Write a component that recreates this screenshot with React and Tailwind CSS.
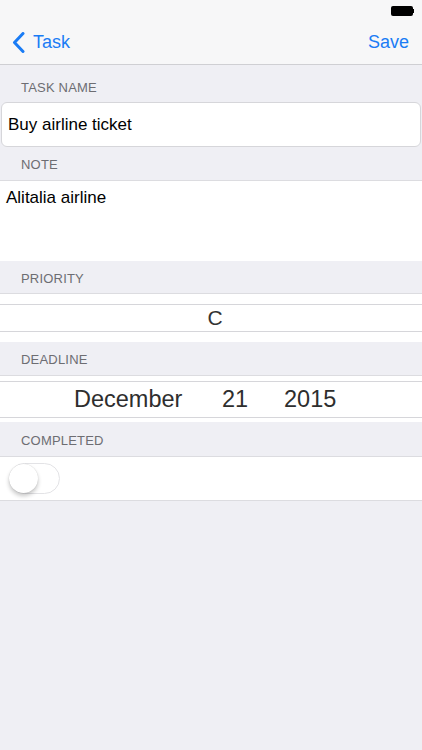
import React from "react";

function Header({ children, h, pt }) {
  return (
    <div className={`${h} ${pt} bg-[#efeff4] pl-[21px] text-[13px] leading-[16px] text-[#6d6d72] tracking-[0.2px]`}>
      {children}
    </div>
  );
}

export default function App() {
  return (
    <div className="min-h-[750px] w-[422px] bg-[#efeff4] font-['Liberation_Sans',Arial,sans-serif]">
      {/* Nav bar */}
      <div className="h-[65px] bg-[#f7f7f8] border-b border-[#cfcfd3] relative">
        <div className="h-[21px] flex items-center justify-end pr-[8px]">
          <div className="flex items-center">
            <div className="w-[22px] h-[10px] bg-black rounded-[2px]" />
            <div className="w-[1.5px] h-[4px] bg-black" />
          </div>
        </div>
        <div className="h-[43px] flex items-center justify-between pl-[12px] pr-[13px]">
          <div className="flex items-center text-[#1a7cf5] text-[18px]">
            <svg width="13" height="21" viewBox="0 0 13 21" className="mr-[8px]">
              <path d="M11 1.5 L2.5 10.5 L11 19.5" fill="none" stroke="#1a7cf5" strokeWidth="3" strokeLinecap="round" strokeLinejoin="round" />
            </svg>
            <span>Task</span>
          </div>
          <span className="text-[#1a7cf5] text-[18px]">Save</span>
        </div>
      </div>

      <Header h="h-[37px]" pt="pt-[15px]">TASK NAME</Header>
      <div className="h-[45px] mx-[1px] bg-white border border-[#d6d6da] rounded-[6px] flex items-center pl-[6px] text-[17px] text-black">
        Buy airline ticket
      </div>

      <Header h="h-[33px]" pt="pt-[10px]">NOTE</Header>
      <div className="h-[81px] bg-white border-t border-[#dcdce0] pl-[6px] pt-[7px] text-[17px] leading-[20px] text-black">
        Alitalia airline
      </div>

      <Header h="h-[32px]" pt="pt-[10px]">PRIORITY</Header>
      <div className="h-[49px] bg-white border-t border-[#dcdce0] pt-[10px]">
        <div className="h-[28px] border-y border-[#d6d6da] flex items-center justify-center pl-[8px] text-[21px] text-[#333]">
          C
        </div>
      </div>

      <Header h="h-[33px]" pt="pt-[10px]">DEADLINE</Header>
      <div className="h-[47px] bg-white border-t border-[#dcdce0] pt-[5px]">
        <div className="h-[37px] border-y border-[#d6d6da] flex items-center text-[23.5px] text-[#2e2e2e]">
          <span className="ml-[74px] w-[111px]">December</span>
          <span className="ml-[37px] w-[26px]">21</span>
          <span className="ml-[36px]">2015</span>
        </div>
      </div>

      <Header h="h-[34px]" pt="pt-[11px]">COMPLETED</Header>
      <div className="h-[45px] bg-white border-y border-[#dcdce0] flex items-center pl-[9px]">
        <div className="w-[51px] h-[31px] rounded-full border-[1.5px] border-[#e3e3e6] bg-white relative">
          <div className="absolute left-[-1px] top-[-0.5px] w-[29px] h-[29px] rounded-full bg-white shadow-[0_3px_4px_rgba(0,0,0,0.22),0_0_1px_rgba(0,0,0,0.2)]" />
        </div>
      </div>
    </div>
  );
}
